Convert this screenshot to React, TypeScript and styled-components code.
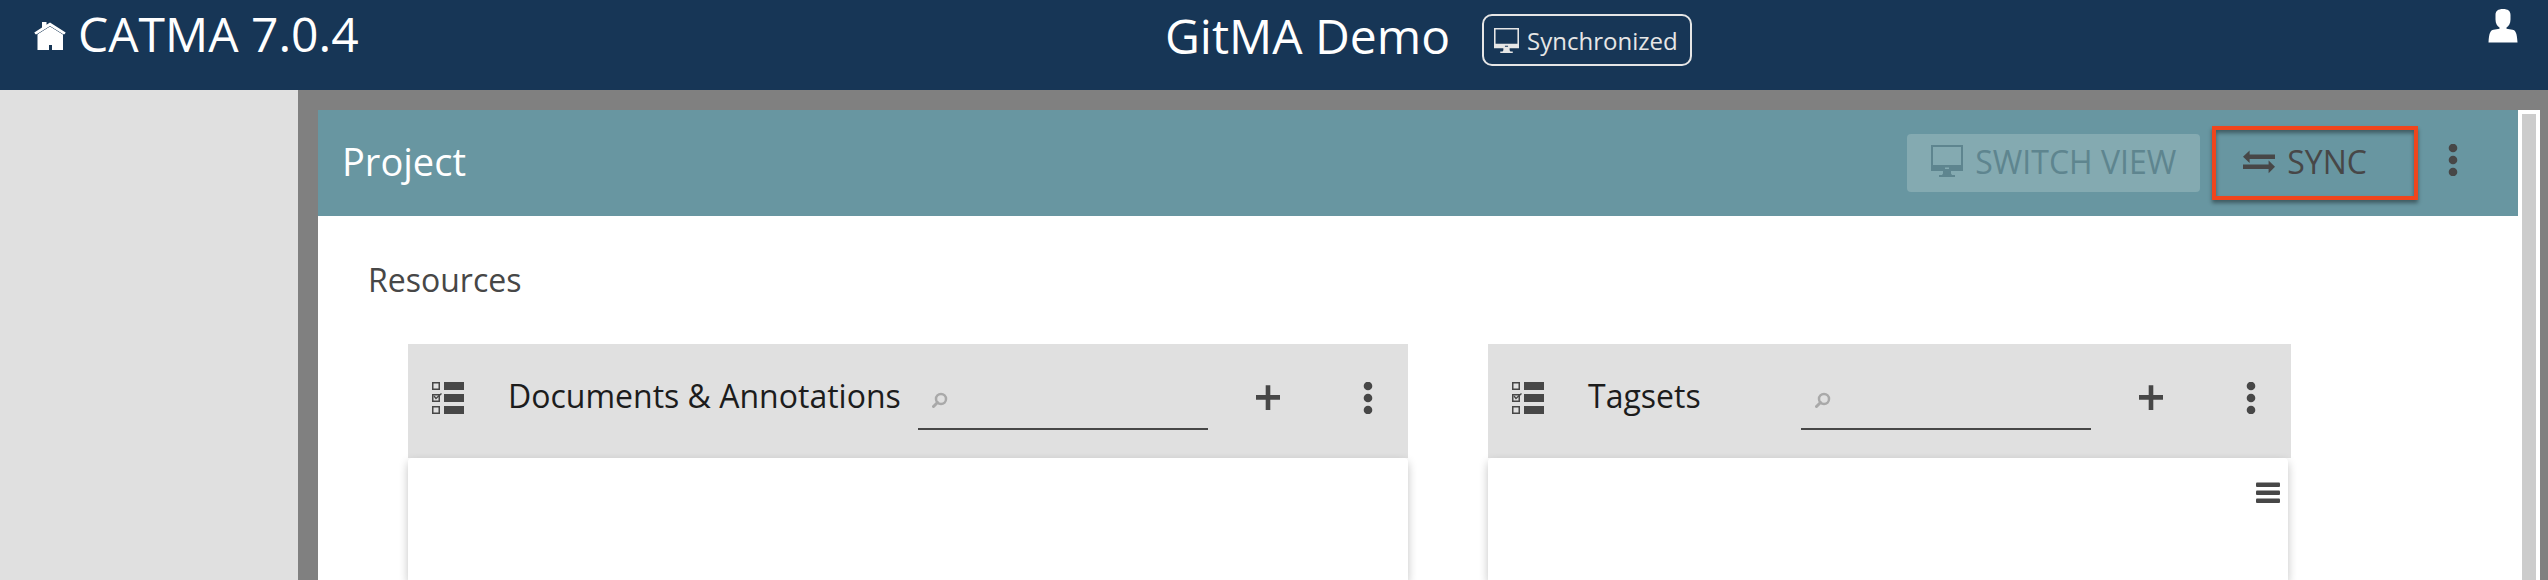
import React from "react";
import styled, { createGlobalStyle } from "styled-components";

const GlobalStyle = createGlobalStyle`
  *, *::before, *::after { box-sizing: border-box; }
  body {
    margin: 0;
    font-family: "Open Sans", "Noto Sans", sans-serif;
    font-kerning: normal;
    text-rendering: optimizeLegibility;
    color: #474747;
  }
  button, input { font: inherit; color: inherit; }
  h1, h2, h3 { margin: 0; font-weight: 400; }
`;

const Shell = styled.div`
  display: flex;
  flex-direction: column;
  min-height: 100vh;
  background: #808080;
`;

const TopBar = styled.header`
  display: flex;
  justify-content: space-between;
  align-items: flex-start;
  height: 90px;
  padding: 0 28px 0 34px;
  background: #173656;
  color: #fff;
`;

const HomeLink = styled.a`
  display: flex;
  align-items: center;
  gap: 12px;
  padding-right: 12px;
  color: inherit;
  font-size: 48px;
  line-height: 68px;
  text-decoration: none;
  white-space: nowrap;
`;

const ProjectInfo = styled.div`
  display: flex;
  align-items: center;
  gap: 32px;
`;

const ProjectName = styled.h1`
  font-size: 48px;
  line-height: 72px;
  white-space: nowrap;
`;

const StatusBadge = styled.button`
  display: flex;
  align-items: center;
  gap: 8px;
  height: 52px;
  margin-top: 8px;
  padding: 0 12px 0 10px;
  border: 2px solid #e6e6e6;
  border-radius: 10px;
  background: transparent;
  color: #e6e6e6;
  font-size: 24px;
`;

const IconButton = styled.button<{ $width: number }>`
  display: flex;
  flex: none;
  align-items: center;
  justify-content: center;
  width: ${(p) => p.$width}px;
  height: 52px;
  padding: 0;
  border: 0;
  background: transparent;
`;

const AccountButton = styled(IconButton)`
  color: #fff;
`;

const ViewMenuButton = styled(IconButton)`
  padding-bottom: 6px;
`;

const Body = styled.div`
  display: flex;
  flex: 1;
`;

const Sidebar = styled.nav`
  flex: none;
  width: 298px;
  background: #e0e0e0;
`;

const Workspace = styled.div`
  display: flex;
  flex: 1;
  min-width: 0;
  padding: 20px 8px 0 20px;
`;

const ProjectView = styled.main`
  display: flex;
  flex: 1;
  flex-direction: column;
  min-width: 0;
  background: #fff;
`;

const ScrollTrack = styled.div`
  display: flex;
  flex: none;
  width: 22px;
  padding: 4px 4px 0;
  background: #fff;
`;

const ScrollThumb = styled.div`
  flex: 1;
  background: #ccc;
`;

const ViewHeader = styled.div`
  display: flex;
  align-items: center;
  gap: 12px;
  height: 106px;
  padding: 0 42px 0 24px;
  background: #6896a1;
`;

const ViewTitle = styled.h2`
  flex: 1;
  padding-bottom: 4px;
  color: #fff;
  font-size: 38px;
  line-height: 52px;
`;

const ActionButton = styled.button<{ $highlighted?: boolean }>`
  display: flex;
  flex: none;
  align-items: center;
  gap: 12px;
  height: ${(p) => (p.$highlighted ? 74 : 58)}px;
  padding: ${(p) => (p.$highlighted ? "0 47px 4px 27px" : "0 24px 4px")};
  border: ${(p) => (p.$highlighted ? "4px solid #f0451c" : "0")};
  border-radius: ${(p) => (p.$highlighted ? 0 : 4)}px;
  background: ${(p) => (p.$highlighted ? "transparent" : "#84aab1")};
  box-shadow: ${(p) =>
    p.$highlighted ? "0 3px 4px rgba(0, 0, 0, 0.4), inset 0 3px 4px rgba(0, 0, 0, 0.4)" : "none"};
  color: #474747;
  font-size: 32px;
  white-space: nowrap;

  &:disabled { color: #5e858f; }
`;

const SectionTitle = styled.h3`
  padding: 40px 50px 0;
  font-size: 32px;
  line-height: 48px;
`;

const Resources = styled.div`
  display: grid;
  flex: 1;
  grid-template-columns: 1000fr 803fr;
  gap: 80px;
  padding: 40px 227px 0 90px;
`;

const Card = styled.section`
  display: flex;
  flex-direction: column;
  min-width: 0;
`;

const CardHeader = styled.div`
  display: flex;
  align-items: center;
  gap: 20px;
  height: 114px;
  padding-bottom: 6px;
  background: #e0e0e0;
`;

const CardTitle = styled.h3`
  flex: 1;
  min-width: 0;
  padding-bottom: 4px;
  color: #1c1c1c;
  font-size: 32px;
  line-height: 44px;
  white-space: nowrap;
`;

const Search = styled.label`
  display: flex;
  flex: none;
  align-items: center;
  width: 290px;
  height: 64px;
  padding: 6px 14px 0;
  border-bottom: 2px solid #474747;
  color: #a9a9a9;
`;

const SearchInput = styled.input`
  flex: 1;
  min-width: 0;
  padding: 0 8px;
  border: 0;
  outline: 0;
  background: transparent;
  color: #474747;
  font-size: 24px;
`;

const CardBody = styled.div<{ $inset?: boolean }>`
  display: flex;
  flex: 1;
  align-items: flex-start;
  justify-content: flex-end;
  margin-right: ${(p) => (p.$inset ? 3 : 0)}px;
  padding: 9px 0;
  border-radius: 4px 4px 0 0;
  background: #fff;
  box-shadow: 0 4px 10px rgba(0, 0, 0, 0.24);
`;

const Icon = styled.svg<{ $size: number }>`
  display: block;
  flex: none;
  width: ${(p) => p.$size}px;
  height: ${(p) => p.$size}px;
  fill: currentColor;
`;

type IconProps = { size?: number };

const HomeIcon = ({ size = 32 }: IconProps) => (
  <Icon $size={size} viewBox="0 0 32 32" aria-hidden="true">
    <path d="M16 7.500L29 16v17H18v-6H15v6H3.500V16z" />
    <path
      d="M.3 14.600L8 9.500V4h4.500v2.800L16 4.400 31.700 14.600l-1.100 1.700h-1.300L16 8 2.700 16.300H1.400z"
      stroke="#173656"
      strokeWidth="1"
      paintOrder="stroke"
    />
  </Icon>
);

const DesktopIcon = ({ size = 32 }: IconProps) => (
  <Icon $size={size} viewBox="0 0 16 16" aria-hidden="true">
    <path
      fillRule="evenodd"
      d="M0 0h16v13h-6v1.200l.5.800H12v1H4v-1h1.500l.5-.8V13H0zM1 1v9h14V1zM7 11.300v.7h2v-.7z"
    />
  </Icon>
);

const ExchangeIcon = ({ size = 32 }: IconProps) => (
  <Icon $size={size} viewBox="0 0 16 16" aria-hidden="true">
    <path d="M16 4.800v2.200H3.300V9L0 5.900l3.300-3.100v2zM0 9.800h12.800V7.700L16 10.900l-3.200 3.200V12H0z" />
  </Icon>
);

const UserIcon = ({ size = 34 }: IconProps) => (
  <Icon $size={size} viewBox="0 0 34 34" aria-hidden="true">
    <path d="M17 0c5 0 7.500 2 7.500 6v4.500c0 4-1.700 6.800-4 8v1.300l6 .9c3 .6 4.500 3 5 12.800H2.500c.5-9.800 2-12.200 5-12.800l6-.9v-1.300c-2.300-1.200-4-4-4-8V6c0-4 2.500-6 7.500-6z" />
  </Icon>
);

const DotsIcon = ({ size = 32 }: IconProps) => (
  <Icon $size={size} viewBox="0 0 32 32" aria-hidden="true">
    <circle cx="16" cy="4" r="4.300" />
    <circle cx="16" cy="16" r="4.300" />
    <circle cx="16" cy="28" r="4.300" />
  </Icon>
);

const PlusIcon = ({ size = 32 }: IconProps) => (
  <Icon $size={size} viewBox="0 0 32 32" aria-hidden="true">
    <path d="M13.700 3.300h4.600v9.700H28v4.700h-9.700V28h-4.600V17.700H4V13h9.700z" />
  </Icon>
);

const ListSelectIcon = ({ size = 32 }: IconProps) => (
  <Icon $size={size} viewBox="0 0 32 32" aria-hidden="true">
    <path d="M12 0h20v8H12zM12 12h20v8H12zM12 24h20v8H12z" />
    <path
      fillRule="evenodd"
      d="M0 0h8v8H0zM1.500 1.500v5h5v-5zM0 12h8v8H0zM1.500 13.500v5h5v-5zM0 24h8v8H0zM1.500 25.500v5h5v-5z"
    />
    <path d="M2 14l2 2.500 5.500-5" fill="none" stroke="currentColor" strokeWidth="1.400" />
  </Icon>
);

const SearchIcon = ({ size = 16 }: IconProps) => (
  <Icon $size={size} viewBox="0 0 16 16" aria-hidden="true">
    <circle cx="9" cy="7" r="5" fill="none" stroke="currentColor" strokeWidth="2.500" />
    <path d="M5.500 10.500L1.500 14.500" stroke="currentColor" strokeWidth="3" strokeLinecap="round" />
  </Icon>
);

const MenuIcon = ({ size = 24 }: IconProps) => (
  <Icon $size={size} viewBox="0 0 24 24" aria-hidden="true">
    <rect y="1.500" width="24" height="4.500" rx="1" />
    <rect y="9.500" width="24" height="4.500" rx="1" />
    <rect y="17.500" width="24" height="4.500" rx="1" />
  </Icon>
);

type ResourceCardProps = { title: string; inset?: boolean; children?: React.ReactNode };

const ResourceCard = ({ title, inset, children }: ResourceCardProps) => (
  <Card>
    <CardHeader>
      <IconButton $width={80} aria-label={`Select ${title}`}>
        <ListSelectIcon />
      </IconButton>
      <CardTitle>{title}</CardTitle>
      <Search>
        <SearchIcon />
        <SearchInput type="text" aria-label={`Search ${title}`} />
      </Search>
      <IconButton $width={80} aria-label={`Add to ${title}`}>
        <PlusIcon />
      </IconButton>
      <IconButton $width={80} aria-label={`${title} options`}>
        <DotsIcon />
      </IconButton>
    </CardHeader>
    <CardBody $inset={inset}>{children}</CardBody>
  </Card>
);

export default function App() {
  return (
    <>
      <GlobalStyle />
      <Shell>
        <TopBar>
          <HomeLink href="#home">
            <HomeIcon />
            CATMA 7.0.4
          </HomeLink>
          <ProjectInfo>
            <ProjectName>GitMA Demo</ProjectName>
            <StatusBadge>
              <DesktopIcon size={25} />
              Synchronized
            </StatusBadge>
          </ProjectInfo>
          <AccountButton $width={34} aria-label="Account">
            <UserIcon />
          </AccountButton>
        </TopBar>
        <Body>
          <Sidebar aria-label="Main" />
          <Workspace>
            <ProjectView>
              <ViewHeader>
                <ViewTitle>Project</ViewTitle>
                <ActionButton disabled>
                  <DesktopIcon />
                  SWITCH VIEW
                </ActionButton>
                <ActionButton $highlighted>
                  <ExchangeIcon />
                  SYNC
                </ActionButton>
                <ViewMenuButton $width={46} aria-label="Project options">
                  <DotsIcon />
                </ViewMenuButton>
              </ViewHeader>
              <SectionTitle>Resources</SectionTitle>
              <Resources>
                <ResourceCard title="Documents &amp; Annotations" />
                <ResourceCard title="Tagsets" inset>
                  <IconButton $width={40} aria-label="Tagset columns">
                    <MenuIcon />
                  </IconButton>
                </ResourceCard>
              </Resources>
            </ProjectView>
            <ScrollTrack>
              <ScrollThumb />
            </ScrollTrack>
          </Workspace>
        </Body>
      </Shell>
    </>
  );
}
